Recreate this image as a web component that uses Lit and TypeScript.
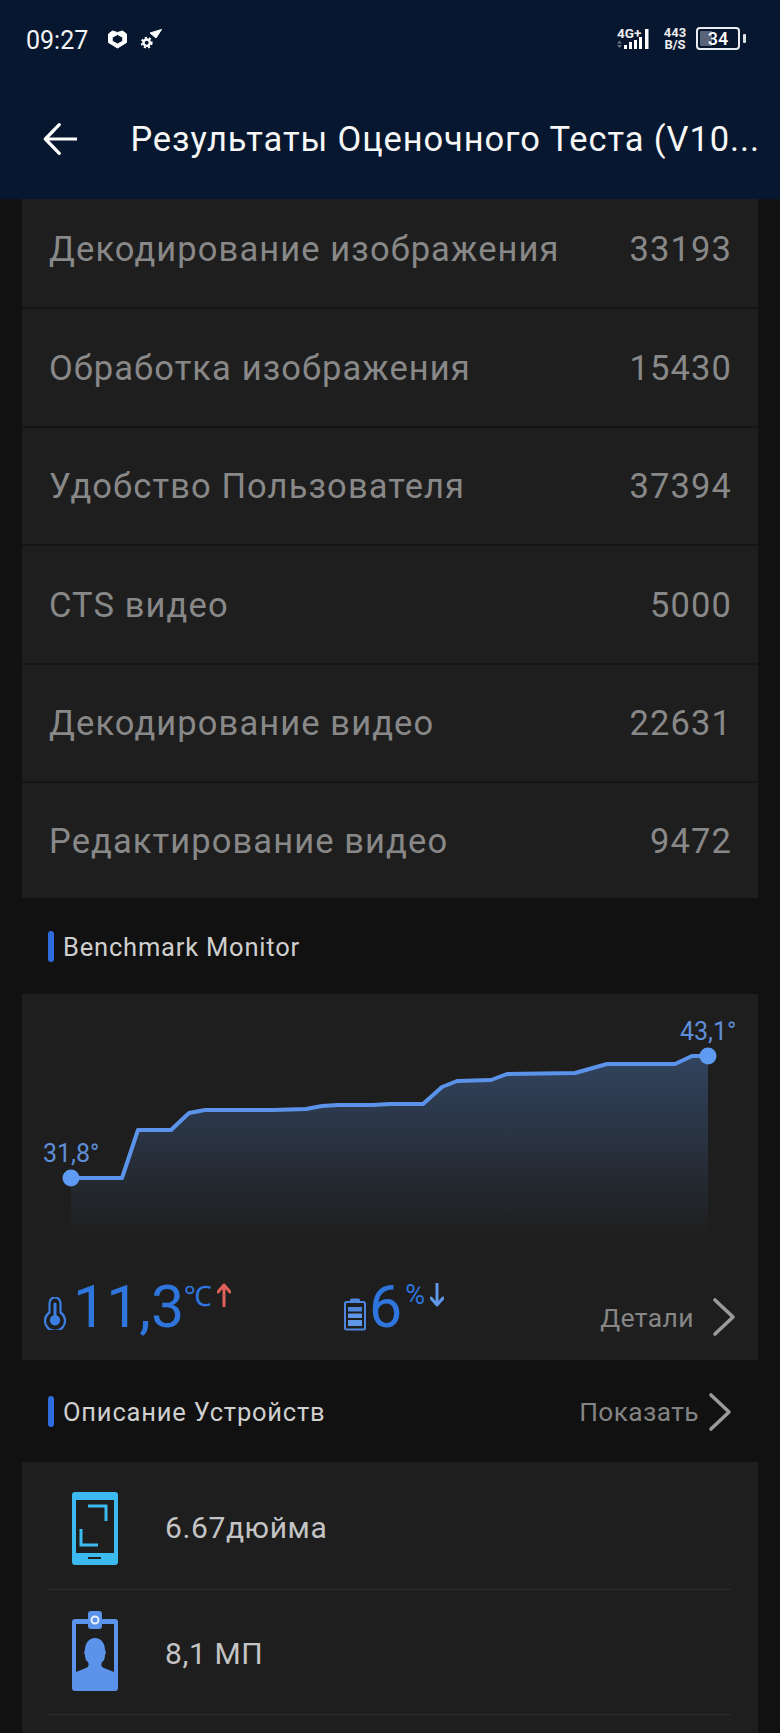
import { LitElement, html, css, svg } from "lit";
import { customElement } from "lit/decorators.js";

const rows: [string, string][] = [
  ["Декодирование изображения", "33193"],
  ["Обработка изображения", "15430"],
  ["Удобство Пользователя", "37394"],
  ["CTS видео", "5000"],
  ["Декодирование видео", "22631"],
  ["Редактирование видео", "9472"],
];

// Points in card coordinates (card origin 22,994)
const pts: [number, number][] = [
  [71,1178],[122,1178],[138,1130],[171,1130],[189,1113],[205,1110],[273,1110],[306,1109],[322,1106],[338,1105],[373,1105],
  [390,1104],[423,1104],[442,1087],[457,1081],[491,1080],[507,1074],[575,1073],[607,1064],[675,1064],[692,1056],[708,1056],
].map(([x, y]) => [x - 22, y - 994] as [number, number]);
const line = pts.map((p) => p.join(",")).join(" ");
const area = `M49,242 L${line} L686,242 Z`;

const chevron = svg`<polyline points="3,3 21,20 3,37" fill="none" stroke="currentColor" stroke-width="3.6" stroke-linecap="round" stroke-linejoin="round"/>`;

@customElement("app-root")
export class AppRoot extends LitElement {
  static styles = css`
    :host { display: block; width: 780px; height: 1733px; overflow: hidden; background: #111111; font-family: Roboto, "Noto Sans", sans-serif; color: #ccc; }
    .top { background: #06172f; height: 199px; color: #fff; display: flex; flex-direction: column; }
    .status { height: 78px; box-sizing: border-box; padding: 28px 34px 0 26px; display: flex; align-items: flex-start; }
    .time { font-size: 25px; line-height: 25px; width: 81px; color: #f4f4f4; }
    .st-ic { display: block; }
    .st-ic.a { margin-right: 13px; margin-top: 0; }
    .st-ic.b { margin-top: 1px; }
    .spacer { flex: 1; }
    .net { position: relative; width: 36px; height: 24px; margin-right: 9px; }
    .net b { position: absolute; left: 0; top: -1px; font-size: 13.5px; line-height: 13px; font-weight: 700; color: #eee; }
    .net svg { position: absolute; left: 0; top: 0; }
    .speed { width: 26px; font-size: 13px; line-height: 12px; font-weight: 700; text-align: center; color: #eee; margin-right: 8px; margin-top: -1px; }
    .bat { width: 44px; height: 23px; box-sizing: border-box; border: 2px solid #e9edf2; border-radius: 4px; position: relative; font-size: 18px; line-height: 19px; text-align: center; color: #fff; font-weight: 500; margin-top: -1px; }
    .bat i { position: absolute; left: 2px; top: 2px; bottom: 2px; width: 12px; background: #5a6478; border-radius: 1px; }
    .bat span { position: relative; }
    .nub { width: 3px; height: 9px; background: #dfe3e8; border-radius: 1px; margin: 6px 0 0 3px; }
    .bar { display: flex; align-items: center; height: 104px; box-sizing: border-box; padding: 20px 20px 0 43px; margin-top: -1px; }
    .title { margin-left: 53px; white-space: nowrap; font-size: 34.5px; letter-spacing: 0.9px; color: #f7f7f7; }

    .content { padding: 0 22px; }
    .scores { display: flex; flex-direction: column; gap: 2px; background: #151515; }
    .row { height: 116.5px; background: #1e1e1e; display: flex; align-items: center; justify-content: space-between; padding: 1px 26px 0 27px; box-sizing: border-box; font-size: 34.5px; letter-spacing: 1.1px; color: #888888; }
    .row:first-child { height: 108px; padding: 0 26px 8px 27px; }
    .row:last-child { height: 115px; }

    .sec { height: 96px; box-sizing: border-box; padding: 1px 3px 0 26px; display: flex; align-items: center; font-size: 25.5px; letter-spacing: 0.8px; color: #cfcfcf; }
    .sec.two { height: 102px; padding-right: 26px; }
    .mark { width: 6px; height: 31px; border-radius: 3px; background: #2f6bdd; margin-right: 9px; }
    .more { margin-left: auto; display: flex; align-items: center; color: #838383; font-size: 26.3px; letter-spacing: .4px; }
    .more svg { margin-left: 9px; color: #9a9a9a; }

    .mon { background: #1e1e1e; height: 366px; display: flex; flex-direction: column; }
    .chart { display: block; width: 736px; height: 270px; }
    .chart text { font-family: Roboto, sans-serif; font-size: 25px; fill: #5f8ed8; }
    .stats { display: flex; align-items: flex-start; height: 96px; padding-left: 22px; color: #2e75dd; position: relative; }
    .big { font-size: 59px; line-height: 68px; margin-top: 9px; margin-left: 7px; letter-spacing: 0; }
    .big.six { margin-left: 3px; }
    .unit { font-size: 28px; line-height: 30px; margin-top: 18px; color: #2e75dd; }
    .unit.pct { font-size: 27px; margin-left: 3px; margin-top: 16px; }
    .stat-ic { margin-top: 33px; }
    .stat-ic.bt { margin-top: 34px; }
    .arr { margin-top: 19px; margin-left: 5px; }
    .stat2 { display: flex; margin-left: 113px; }
    .det { margin-left: auto; display: flex; align-items: center; align-self: flex-start; height: 60px; margin-top: 23px; padding-right: 22px; color: #868686; font-size: 26.5px; letter-spacing: .4px; }
    .det svg { margin-left: 18px; color: #9a9a9a; }

    .dev { background: #1e1e1e; padding: 0 26px; height: 280px; }
    .dev-row { display: flex; align-items: center; height: 128px; border-bottom: 1px solid #2a2a2a; box-sizing: border-box; padding: 3px 0 0 24px; font-size: 30px; letter-spacing: .6px; color: #c4c4c4; }
    .dev-row.b { height: 125px; padding-top: 2px; }
    .dev-row svg { margin-right: 47px; flex: none; }
    .dev-row .ic1 { margin-top: 2px; }
    .dev-row .ic2 { margin-top: -4px; }
  `;

  render() {
    return html`
      <div class="top">
        <div class="status">
          <div class="time">09:27</div>
          <svg class="st-ic a" width="21" height="21" viewBox="0 0 21 21"><path fill-rule="evenodd" d="M5.500 3 10.500 4.500 15.500 3 19.500 6V14.500L10.500 20 1.500 14.500V6ZM10.500 6.500 5.200 9.300V13.200L10.500 16 15.800 13.200V9.300Z" fill="#fff" stroke="#fff" stroke-width="1" stroke-linejoin="round"/></svg>
          <svg class="st-ic b" width="21" height="20" viewBox="0 0 21 20">
            <path d="M9 4 20.500 .5 15 9Z" fill="#fff" stroke="#fff" stroke-width="1" stroke-linejoin="round"/>
            <circle cx="5.700" cy="13.700" r="5" fill="none" stroke="#fff" stroke-width="1.800" stroke-dasharray="2.200 2"/>
            <circle cx="5.700" cy="13.700" r="3.200" fill="none" stroke="#fff" stroke-width="2.400"/>
          </svg>
          <div class="spacer"></div>
          <div class="net">
            <b>4G+</b>
            <svg width="36" height="24" viewBox="0 0 36 24">
              <path d="M2.500 12.500 5 15.500H0ZM2.500 20 0 17h5Z" fill="#6b7482"/>
              <rect x="7" y="17" width="3" height="4" fill="#fff"/><rect x="12" y="14" width="3" height="7" fill="#fff"/><rect x="17" y="12" width="3" height="9" fill="#fff"/><rect x="22" y="9" width="3" height="12" fill="#fff"/><rect x="28" y="1" width="3.500" height="20" fill="#fff"/>
            </svg>
          </div>
          <div class="speed">443<br />B/S</div>
          <div class="bat"><i></i><span>34</span></div>
          <div class="nub"></div>
        </div>
        <div class="bar">
          <svg width="36" height="36" viewBox="0 0 36 36"><path d="M35 18H3M17 3 2.500 18 17 33" fill="none" stroke="#fff" stroke-width="3.400" stroke-linecap="round" stroke-linejoin="round"/></svg>
          <div class="title">Результаты Оценочного Теста (V10...</div>
        </div>
      </div>
      <div class="content">
        <div class="scores">
          ${rows.map(([l, v]) => html`<div class="row"><span>${l}</span><span>${v}</span></div>`)}
        </div>
        <div class="sec"><div class="mark"></div>Benchmark Monitor</div>
        <div class="mon">
          <svg class="chart" viewBox="0 0 736 270">
            <defs><linearGradient id="g" x1="0" y1="0" x2="0" y2="1"><stop offset="0" stop-color="#32445f"/><stop offset="1" stop-color="#1e1e1e"/></linearGradient></defs>
            <path d="${area}" fill="url(#g)"/>
            <polyline points="${line}" fill="none" stroke="#5b93ea" stroke-width="4" stroke-linejoin="round"/>
            <circle cx="49" cy="184" r="8.500" fill="#5f9bf2"/>
            <circle cx="686" cy="62" r="8.500" fill="#5f9bf2"/>
            <text x="21" y="168">31,8°</text>
            <text x="658" y="46">43,1°</text>
          </svg>
          <div class="stats">
            <svg class="stat-ic" width="22" height="33" viewBox="0 0 22 33"><path d="M5.500 6a5.500 5.500 0 0 1 11 0v9.500a10 10 0 1 1-11 0Z" fill="none" stroke="#3d7fe0" stroke-width="2.200"/><path d="M9.500 7a1.500 1.500 0 0 1 3 0v11.300a5.200 5.200 0 1 1-3 0Z" fill="#3d7fe0"/></svg>
            <span class="big">11,3</span><span class="unit">℃</span>
            <svg class="arr" width="14" height="24" viewBox="0 0 14 24"><path d="M7 23V2M1 9 7 2l6 7" fill="none" stroke="#e0605a" stroke-width="3" stroke-linecap="round" stroke-linejoin="round"/></svg>
            <div class="stat2">
              <svg class="stat-ic bt" width="22" height="33" viewBox="0 0 22 33"><rect x="6" y="0.500" width="10" height="4" rx="1.500" fill="#4d86dc"/><rect x="1" y="4" width="20" height="27.500" rx="1.500" fill="none" stroke="#4d86dc" stroke-width="2"/><rect x="4" y="9" width="14" height="4.500" fill="#4d86dc"/><rect x="4" y="15.500" width="14" height="4.500" fill="#5f96e8"/><rect x="4" y="22" width="14" height="6" fill="#5f96e8"/></svg>
              <span class="big six">6</span><span class="unit pct">%</span>
              <svg class="arr" width="14" height="24" viewBox="0 0 14 24"><path d="M7 1v21M1 15l6 7 6-7" fill="none" stroke="#5f96e8" stroke-width="3" stroke-linecap="round" stroke-linejoin="round"/></svg>
            </div>
            <div class="det">Детали<svg width="24" height="40" viewBox="0 0 24 40">${chevron}</svg></div>
          </div>
        </div>
        <div class="sec two"><div class="mark"></div>Описание Устройств
          <div class="more">Показать<svg width="24" height="40" viewBox="0 0 24 40">${chevron}</svg></div>
        </div>
        <div class="dev">
          <div class="dev-row">
            <svg class="ic1" width="46" height="73" viewBox="0 0 46 73">
              <rect width="46" height="73" rx="3" fill="#3cb9ee"/>
              <rect x="4" y="8" width="38" height="53" fill="#1e1e1e"/>
              <path d="M16 14H34V29M9 37V53H26" fill="none" stroke="#3cb9ee" stroke-width="3"/>
              <rect x="16" y="65" width="13" height="2" fill="#1e1e1e"/>
            </svg>
            6.67дюйма
          </div>
          <div class="dev-row b">
            <svg class="ic2" width="46" height="80" viewBox="0 0 46 80">
              <rect y="8" width="46" height="72" rx="3" fill="#5b93ea"/>
              <rect x="4" y="13" width="38" height="48" fill="#1e1e1e"/>
              <rect x="16" y="0" width="14" height="18" rx="3" fill="#5b93ea"/>
              <circle cx="23" cy="9" r="3.500" fill="none" stroke="#e8f0fc" stroke-width="2"/>
              <path d="M4 61 14 57c3-1 3-4 2-6-2-1-3-4-3-7-1-1-1-4 0-5 0-7 4-12 10-12s10 5 10 12c1 1 1 4 0 5 0 3-1 6-3 7-1 2-1 5 2 6l10 4Z" fill="#5b93ea"/>
            </svg>
            8,1 МП
          </div>
        </div>
      </div>
    `;
  }
}
